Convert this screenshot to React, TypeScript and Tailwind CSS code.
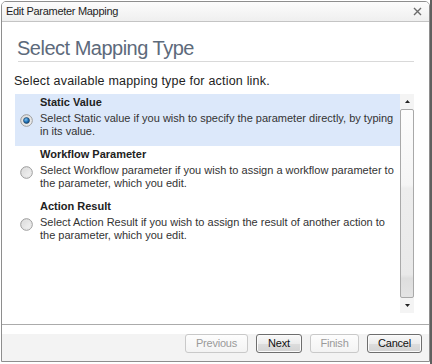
import React from "react";

function Radio({ checked }: { checked?: boolean }) {
  return (
    <svg width="13" height="13" viewBox="0 0 13 13" className="shrink-0">
      <defs>
        <linearGradient id={checked ? "rgc" : "rgu"} x1="0" y1="0" x2="1" y2="1">
          <stop offset="0" stopColor="#d6d6d6" />
          <stop offset="1" stopColor="#f8f8f8" />
        </linearGradient>
        <radialGradient id="rblue" cx="0.4" cy="0.35" r="0.7">
          <stop offset="0" stopColor="#7cc0f0" />
          <stop offset="0.6" stopColor="#1d6fb4" />
          <stop offset="1" stopColor="#0d3f6e" />
        </radialGradient>
      </defs>
      <circle cx="6.5" cy="6.5" r="5.8" fill={`url(#${checked ? "rgc" : "rgu"})`} stroke="#9a9a9a" strokeWidth="1" />
      <circle cx="6.5" cy="6.5" r="4.2" fill="none" stroke="#e4e4e4" strokeWidth="0.8" />
      {checked && <circle cx="6.5" cy="6.5" r="3" fill="url(#rblue)" stroke="#23405e" strokeWidth="0.6" />}
    </svg>
  );
}

function Item({
  title,
  lines,
  selected,
}: {
  title: string;
  lines: string;
  selected?: boolean;
}) {
  return (
    <div
      className={`flex items-center h-[52px] pl-[5px] pr-[3px] ${
        selected ? "bg-[#dce8fa]" : "bg-white"
      }`}
    >
      <Radio checked={selected} />
      <div className="ml-[7px] flex flex-col self-stretch pt-[2px]">
        <div className="text-[11px] leading-[13px] font-bold text-[#222]">{title}</div>
        <div className="mt-[3px] text-[11px] leading-[13px] text-[#333]">{lines}</div>
      </div>
    </div>
  );
}

function Btn({ label, disabled, w }: { label: string; disabled?: boolean; w: string }) {
  return (
    <div
      className={`${w} h-[19px] flex items-center justify-center rounded-[3px] text-[11px] tracking-[-0.2px] ${
        disabled
          ? "border border-[#c9c9c9] text-[#9a9a9a] bg-[linear-gradient(#fdfdfd,#f3f3f3)]"
          : "border border-[#6e6e6e] text-[#111] bg-[linear-gradient(#f9f9f9_0%,#ececec_50%,#dddddd_51%,#d3d3d3_100%)] shadow-[inset_0_0_0_1px_#fbfbfb]"
      }`}
    >
      {label}
    </div>
  );
}

export default function App() {
  return (
    <div
      className="w-[432px] h-[364px] bg-white flex overflow-hidden"
      style={{ fontFamily: '"Liberation Sans", Arial, sans-serif' }}
    >
      <div className="w-[1px]" />
      <div className="flex flex-col">
        <div className="h-[1px]" />
        <div className="w-[429px] h-[361px] border border-[#8e8e8e] rounded-t-[5px] flex flex-col bg-white overflow-hidden">
          <div className="h-[20px] shrink-0 border-b border-[#c4c4c4] bg-[linear-gradient(#fcfcfc,#efefef)] flex items-center justify-between pl-[4px] pr-[7px]">
            <span className="text-[11px] tracking-[-0.3px] text-[#1e1e1e]">Edit Parameter Mapping</span>
            <svg width="9" height="9" viewBox="0 0 9 9">
              <path d="M1 1 L8 8 M8 1 L1 8" stroke="#6b6b6b" strokeWidth="1.4" />
            </svg>
          </div>
          <div className="flex-1 flex flex-col pl-[12px] pr-[15px]">
            <div className="ml-[4px] mt-[14px] border-b border-[#d9d9d9] pb-[1px]">
              <div className="text-[20px] leading-[24px] tracking-[-0.5px] text-[#5d6a7b] -ml-[1px]">
                Select Mapping Type
              </div>
            </div>
            <div className="mt-[12px] text-[12.5px] leading-[15px] tracking-[0.2px] text-[#222]">
              Select available mapping type for action link.
            </div>
            <div className="mt-[5px] flex h-[219px]">
              <div className="flex-1 flex flex-col ml-[1px]">
                <Item
                  selected
                  title="Static Value"
                  lines="Select Static value if you wish to specify the parameter directly, by typing in its value."
                />
                <Item
                  title="Workflow Parameter"
                  lines="Select Workflow parameter if you wish to assign a workflow parameter to the parameter, which you edit."
                />
                <Item
                  title="Action Result"
                  lines="Select Action Result if you wish to assign the result of another action to the parameter, which you edit."
                />
              </div>
              <div className="w-[14px] flex flex-col bg-[#f4f4f4]">
                <div className="h-[15px] flex items-center justify-center">
                  <svg width="5" height="3" viewBox="0 0 5 3">
                    <path d="M0 3 L2.5 0 L5 3 Z" fill="#222" />
                  </svg>
                </div>
                <div className="flex-1 border border-[#a9a9a9] rounded-[2px] bg-[linear-gradient(#fdfdfd_0%,#f5f5f5_40%,#ededed_42%,#e9e9e9_88%,#dedede_90%,#e4e4e4_100%)]" />
                <div className="h-[15px] flex items-center justify-center">
                  <svg width="5" height="3" viewBox="0 0 5 3">
                    <path d="M0 0 L5 0 L2.5 3 Z" fill="#222" />
                  </svg>
                </div>
              </div>
            </div>
          </div>
          <div className="h-[10px] border-t border-[#ababab] bg-white shrink-0" />
          <div className="h-[27px] shrink-0 bg-[#f3f3f3] flex justify-end gap-[8px] pr-[7px]">
            <Btn label="Previous" disabled w="w-[63px]" />
            <Btn label="Next" w="w-[46px]" />
            <Btn label="Finish" disabled w="w-[49px]" />
            <Btn label="Cancel" w="w-[55px]" />
          </div>
        </div>
      </div>
      <div className="flex-1 bg-[#5f5f5f]" />
    </div>
  );
}
